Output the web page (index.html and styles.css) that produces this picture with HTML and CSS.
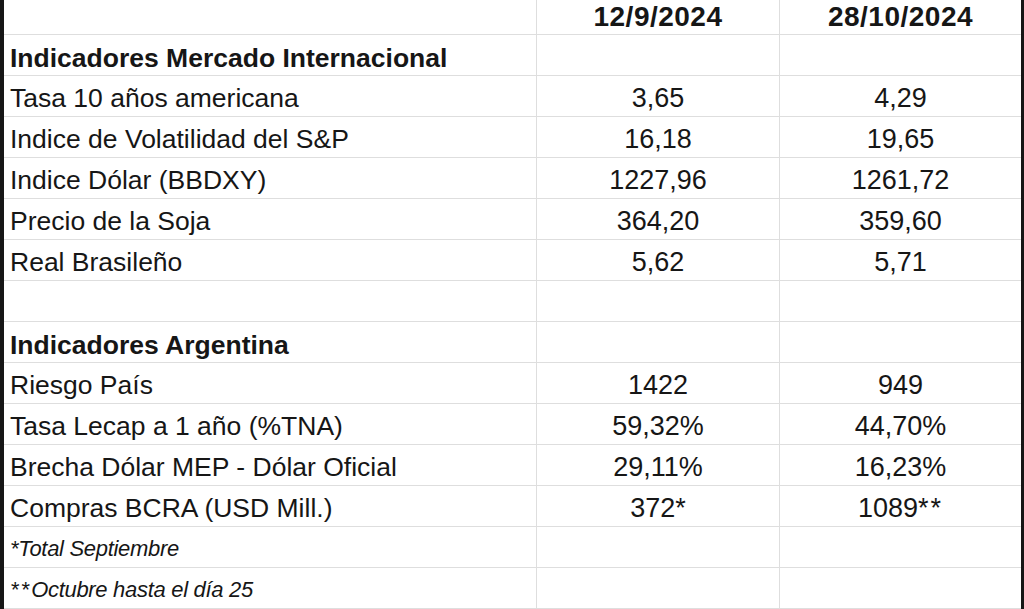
FILE: index.html
```html
<!DOCTYPE html>
<html lang="es">
<head>
<meta charset="utf-8">
<title>Indicadores</title>
<link rel="stylesheet" href="styles.css">
</head>
<body>
<div class="frame">
  <div class="sheet">
    <div class="cell head"></div>
    <div class="cell head num">12/9/2024</div>
    <div class="cell head num">28/10/2024</div>

    <div class="cell label bold">Indicadores Mercado Internacional</div>
    <div class="cell num"></div>
    <div class="cell num"></div>

    <div class="cell label">Tasa 10 años americana</div>
    <div class="cell num">3,65</div>
    <div class="cell num">4,29</div>

    <div class="cell label">Indice de Volatilidad del S&amp;P</div>
    <div class="cell num">16,18</div>
    <div class="cell num">19,65</div>

    <div class="cell label">Indice Dólar (BBDXY)</div>
    <div class="cell num">1227,96</div>
    <div class="cell num">1261,72</div>

    <div class="cell label">Precio de la Soja</div>
    <div class="cell num">364,20</div>
    <div class="cell num">359,60</div>

    <div class="cell label">Real Brasileño</div>
    <div class="cell num">5,62</div>
    <div class="cell num">5,71</div>

    <div class="cell label"></div>
    <div class="cell num"></div>
    <div class="cell num"></div>

    <div class="cell label bold">Indicadores Argentina</div>
    <div class="cell num"></div>
    <div class="cell num"></div>

    <div class="cell label">Riesgo País</div>
    <div class="cell num">1422</div>
    <div class="cell num">949</div>

    <div class="cell label">Tasa Lecap a 1 año (%TNA)</div>
    <div class="cell num">59,32%</div>
    <div class="cell num">44,70%</div>

    <div class="cell label">Brecha Dólar MEP - Dólar Oficial</div>
    <div class="cell num">29,11%</div>
    <div class="cell num">16,23%</div>

    <div class="cell label">Compras BCRA (USD Mill.)</div>
    <div class="cell num">372*</div>
    <div class="cell num">1089<span class="stars">**</span></div>

    <div class="cell label note">*Total Septiembre</div>
    <div class="cell num"></div>
    <div class="cell num"></div>

    <div class="cell label note"><span class="stars">**</span>Octubre hasta el día 25</div>
    <div class="cell num"></div>
    <div class="cell num"></div>
  </div>
</div>
</body>
</html>
```

FILE: styles.css
```css
html, body {
  margin: 0;
  padding: 0;
  background: #ffffff;
}

.frame {
  width: 1024px;
  height: 609px;
  overflow: hidden;
  box-sizing: border-box;
  border-left: 4px solid #161616;
  border-right: 3px solid #161616;
  background: #ffffff;
}

.sheet {
  display: grid;
  grid-template-columns: 532px 243px 242px;
  grid-template-rows: 35px;
  grid-auto-rows: 41px;
  color: #161616;
}

.cell {
  box-sizing: border-box;
  border-bottom: 1px solid #dedede;
  display: flex;
  align-items: center;
  padding-top: 4px;
  white-space: nowrap;
  overflow: hidden;
}

.cell.num {
  border-left: 1px solid #dedede;
  justify-content: center;
  font-family: "Liberation Sans", Arial, sans-serif;
  font-size: 27px;
}

.cell.head {
  padding-top: 0;
}

.cell.head.num {
  font-weight: bold;
  font-size: 28px;
  letter-spacing: 0.5px;
}

.cell.label {
  padding-left: 6px;
  font-family: "Liberation Sans", Arial, sans-serif;
  font-size: 26.5px;
}

.cell.bold {
  font-weight: bold;
  padding-top: 6px;
}

.cell.note {
  font-style: italic;
  font-size: 22px;
  letter-spacing: -0.3px;
}

.stars {
  letter-spacing: 2px;
}
```
